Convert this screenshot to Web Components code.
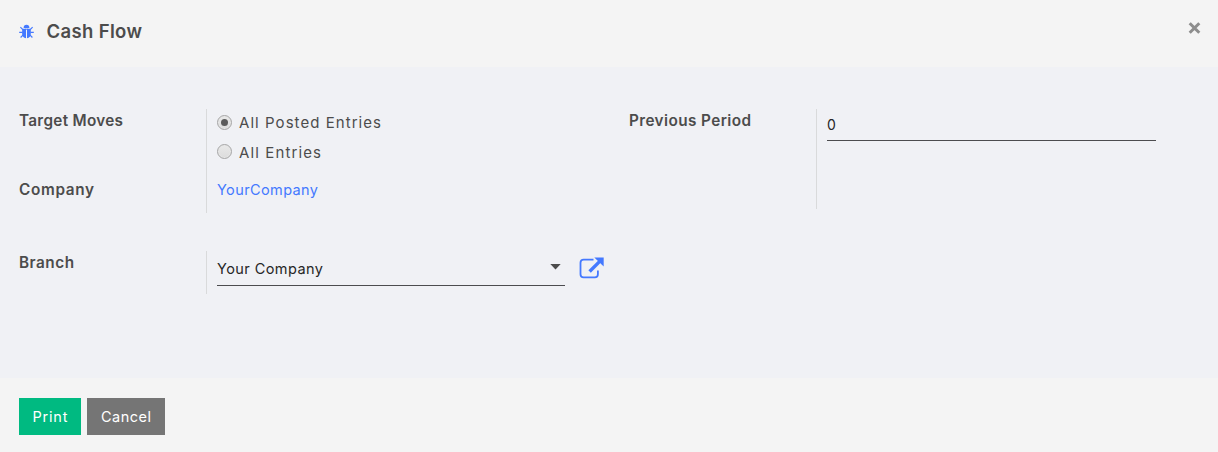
<!DOCTYPE html>
<html lang="en">
<head>
<meta charset="utf-8">
<title>Cash Flow</title>
<style>
html,body{margin:0;height:100%}
body{font-family:Inter,"Liberation Sans",sans-serif;color:#4c4c4c;background:#f4f4f4;overflow:hidden}
</style>
</head>
<body>
<cash-flow-dialog></cash-flow-dialog>
<script>
const define = (name, html, setup) => customElements.define(name, class extends HTMLElement {
  connectedCallback() {
    if (this.shadowRoot) return;
    const t = document.createElement('template');
    t.innerHTML = html;
    this.attachShadow({ mode: 'open' }).append(t.content.cloneNode(true));
    if (setup) setup.call(this, this.shadowRoot);
  }
});

/* Single line of text whose tracking is adjusted to fill the "width" attribute. */
define('tracked-text', `<style>
:host{display:block;line-height:20px;white-space:nowrap}
span{display:inline-block}
</style><span><slot></slot></span>`, function (root) {
  const span = root.querySelector('span');
  const natural = span.getBoundingClientRect().width;
  const count = this.textContent.length;
  span.style.letterSpacing = ((+this.getAttribute('width') - natural) / Math.max(1, count - 1)).toFixed(3) + 'px';
});

define('dialog-header', `<style>
:host{display:flex;box-sizing:border-box;height:67px;padding:20px 17px 0 19px;background:#f4f4f4;align-items:flex-start}
.bug{width:15px;height:15px;margin:4px 12.500px 0 0;flex:none}
.title{font-size:18.500px;font-weight:600;padding-top:1px}
.close{margin:1.500px 0 0 auto;width:13px;height:12px}
svg{display:block}
</style>
<svg class="bug" viewBox="0 0 15 15" fill="#4479ff"><path d="M4.600 4C4.600 2 5.700.8 7.500.8s2.900 1.200 2.900 3.200z"/><path d="M3.200 4.700H7v9.500C4.500 14 3.100 12.300 3.100 9.500zM8 4.700h3.800v4.800c0 2.800-1.300 4.500-3.800 4.700z"/><path d="M1.400 3.200l2.400 2.400M.2 8.300h3.300M1.600 13.500l2.600-2.600M13.600 3.200l-2.400 2.400M14.800 8.300h-3.300M13.400 13.500l-2.600-2.600" fill="none" stroke="#4479ff" stroke-width="1.200"/><path d="M6.200 5.200h2.600" stroke="#4479ff" stroke-width="1"/></svg>
<tracked-text class="title" width="95.5">Cash Flow</tracked-text>
<svg class="close" viewBox="0 0 13 12"><path d="M1.700 1.200l9.600 9.600M11.300 1.200l-9.600 9.600" stroke="#8d8d8d" stroke-width="3" fill="none"/></svg>`);

define('field-group', `<style>
:host{display:grid;grid-template-columns:187px 1fr}
.values{border-left:1px solid #d9dadb;padding-left:10px;box-sizing:border-box}
.labels{font-size:15.300px;font-weight:600;padding-top:2px}
</style><div class="labels"><slot name="label"></slot></div><div class="values"><slot></slot></div>`);

define('radio-option', `<style>
:host{display:flex;height:30px;align-items:flex-start;font-size:15px}
i{box-sizing:border-box;width:15px;height:15px;border:1px solid #a6a6a6;border-radius:50%;background:linear-gradient(#e9e9e9,#dcdcdc);margin:var(--dot-top,2px) 7px 0 0;flex:none;display:grid;place-items:center;box-shadow:inset 0 0 0 1px #e6e6e6}
:host([checked]) i::after{content:"";width:7px;height:7px;border-radius:50%;background:#5b5b5b}
</style><i></i><slot></slot>`);

define('input-line', `<style>
:host{display:flex;box-sizing:border-box;border-bottom:1px solid #4c4c4f;color:#262626;font-size:14.500px;justify-content:space-between}
</style><slot></slot>`);

define('action-button', `<style>
:host{display:flex;box-sizing:border-box;height:37px;padding-top:9px;color:#fff;font-size:14.500px;background:var(--fill)}
</style><slot></slot>`);

define('cash-flow-dialog', `<style>
:host{display:flex;flex-direction:column;height:452px}
main{height:311px;box-sizing:border-box;padding:42px 62px 0 19px;background:#f0f1f5;display:grid;grid-template-columns:610px 1fr;align-items:start}
.moves{height:104px}
.branch{height:43px;margin-top:38px}
.period{height:100px}
.company-label{margin-top:49px}
.options{padding-top:4px}
.link{color:#4479ff;font-size:14.500px;margin-top:7px}
.select-row{display:flex;align-items:flex-start}
.select{width:348px;height:35px;padding-top:8px}
.caret{width:11px;height:6px;margin:5px 4.500px 0 0}
.open{width:25px;height:22px;margin:6px 0 0 14px;flex:none}
.number{height:32px;padding-top:6px;font-size:14px}
svg{display:block}
footer{display:flex;gap:6px;padding:20px 19px 0;height:74px;box-sizing:border-box;background:#f4f4f4}
.print{--fill:#00ba81;width:62px;padding-left:13.500px}
.cancel{--fill:#757575;width:78px;padding-left:14px}
</style>
<dialog-header></dialog-header>
<main>
  <section>
    <field-group class="moves">
      <tracked-text slot="label" width="104">Target Moves</tracked-text>
      <tracked-text slot="label" class="company-label" width="75">Company</tracked-text>
      <div class="options">
        <radio-option checked><tracked-text width="142">All Posted Entries</tracked-text></radio-option>
        <radio-option style="--dot-top:1px"><tracked-text width="82">All Entries</tracked-text></radio-option>
      </div>
      <tracked-text class="link" width="101">YourCompany</tracked-text>
    </field-group>
    <field-group class="branch">
      <tracked-text slot="label" width="55">Branch</tracked-text>
      <div class="select-row">
        <input-line class="select"><tracked-text width="106">Your Company</tracked-text><svg class="caret" viewBox="0 0 11 6"><path d="M.3 0h10.400L5.500 5.500z" fill="#4c4c4c"/></svg></input-line>
        <svg class="open" viewBox="0 0 25 22" fill="none" stroke="#4479ff"><path d="M14.500 2.600H4.600Q1.500 2.600 1.500 5.700v11.500q0 3.100 3.100 3.100h11.200q3.100 0 3.100-3.100V13.500" stroke-width="1.800"/><path d="M10.600 14.500L21.500 3.600" stroke-width="3.400"/><path d="M15.300.6h9.400v9z" fill="#4479ff" stroke="none"/></svg>
      </div>
    </field-group>
  </section>
  <field-group class="period">
    <tracked-text slot="label" width="122">Previous Period</tracked-text>
    <input-line class="number"><tracked-text width="9">0</tracked-text></input-line>
  </field-group>
</main>
<footer>
  <action-button class="print"><tracked-text width="35">Print</tracked-text></action-button>
  <action-button class="cancel"><tracked-text width="50">Cancel</tracked-text></action-button>
</footer>`);
</script>
</body>
</html>
